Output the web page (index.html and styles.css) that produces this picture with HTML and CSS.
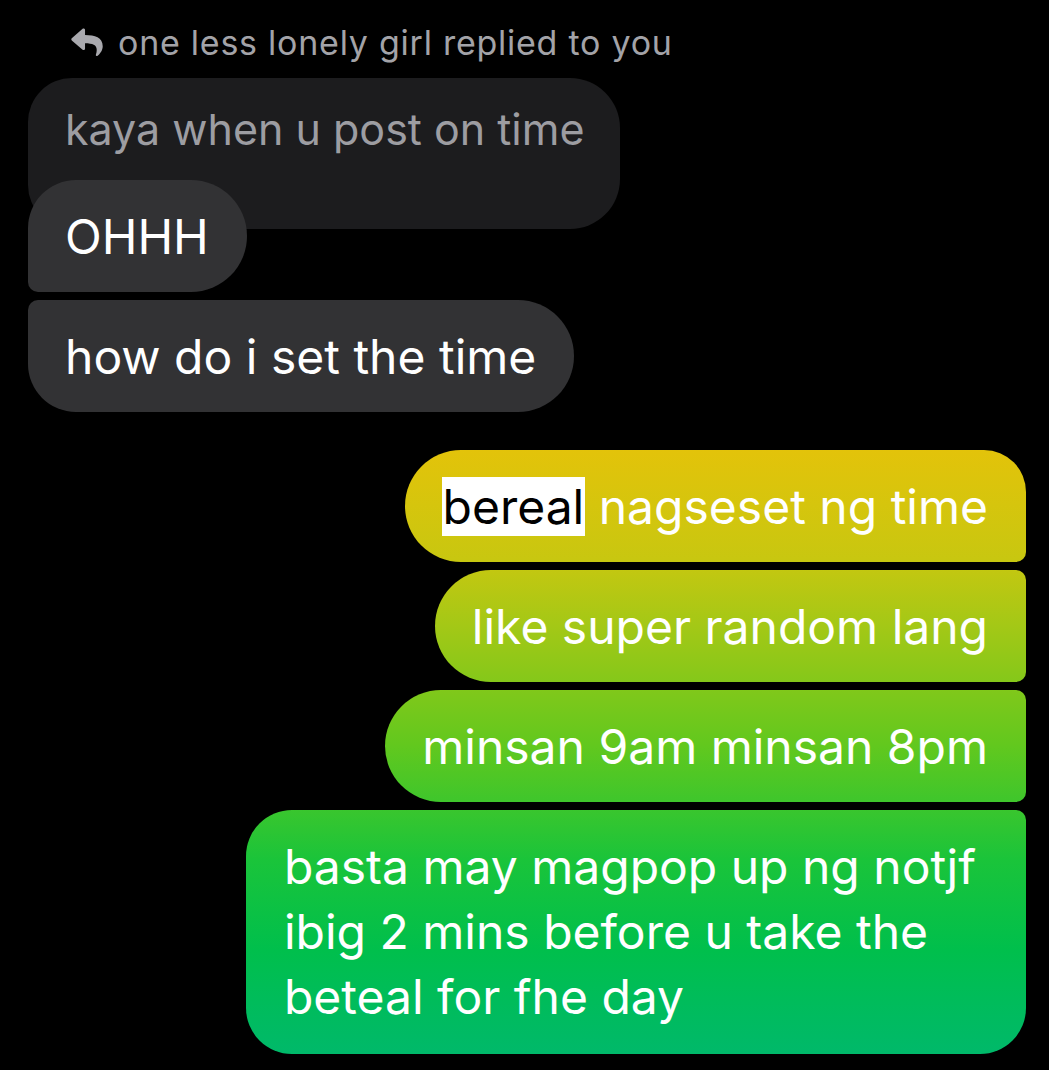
FILE: index.html
```html
<!DOCTYPE html>
<html lang="tl">
<head>
<meta charset="utf-8">
<title>Chat</title>
<link rel="stylesheet" href="styles.css">
</head>
<body>
<div class="chat">
  <div class="reply-note">
    <svg class="reply-icon" viewBox="0 24 512 456" aria-hidden="true"><path d="M8.309 189.836L184.313 37.851C199.719 24.546 224 35.347 224 56.015v80.053c160.629 1.839 288 34.032 288 186.258 0 61.441-39.581 122.309-83.333 154.132-13.653 9.931-33.111-2.533-28.077-18.631 45.344-145.012-21.507-183.51-176.59-185.742V360c0 20.7-24.3 31.453-39.687 18.164l-176.004-152c-11.071-9.562-11.086-26.753 0-36.328z"/></svg>
    <span>one less lonely girl replied to you</span>
  </div>
  <div class="group recv">
    <div class="quote">kaya when u post on time</div>
    <div class="bubble in in-first">OHHH</div>
    <div class="bubble in in-last">how do i set the time</div>
  </div>
  <div class="group sent">
    <div class="bubble out out-first"><span class="hl">bereal</span> nagseset ng time</div>
    <div class="bubble out out-mid">like super random lang</div>
    <div class="bubble out out-mid">minsan 9am minsan 8pm</div>
    <div class="bubble out out-last">basta may magpop up ng notjf<br>ibig 2 mins before u take the<br>beteal for fhe day</div>
  </div>
</div>
</body>
</html>
```
FILE: styles.css
```css
html, body {
  margin: 0;
  padding: 0;
  background: #000;
}
body {
  width: 1049px;
  height: 1070px;
  overflow: hidden;
  font-family: Inter, "Liberation Sans", Arial, sans-serif;
  -webkit-font-smoothing: antialiased;
}
.chat {
  padding: 24px 23px 0 28px;
  display: flex;
  flex-direction: column;
}
.reply-note {
  display: flex;
  align-items: center;
  gap: 14px;
  margin-left: 42px;
  height: 36px;
  color: #a3a3a8;
  font-size: 34px;
  letter-spacing: 0.75px;
  white-space: nowrap;
}
.reply-icon {
  width: 34px;
  height: 28px;
  fill: #a9a9ae;
}
.group {
  display: flex;
  flex-direction: column;
}
.recv {
  align-items: flex-start;
  margin-top: 18px;
}
.sent {
  align-items: flex-end;
  margin-top: 38px;
  gap: 8px;
}
.quote {
  box-sizing: border-box;
  width: 592px;
  height: 151px;
  padding: 20px 38px 0 37px;
  background: #1c1c1e;
  color: #9d9da2;
  font-size: 43px;
  line-height: 63px;
  white-space: nowrap;
  border-radius: 44px 50px 50px 44px;
}
.bubble {
  box-sizing: border-box;
  padding: 25px 38px 24px 37px;
  font-size: 48px;
  line-height: 63px;
  color: #fff;
  white-space: nowrap;
}
.in {
  background: #323234;
}
.in-first {
  margin-top: -49px;
  border-radius: 48px 56px 56px 10px;
}
.in-last {
  margin-top: 8px;
  border-radius: 10px 56px 56px 48px;
}
.out {
  background-image: linear-gradient(180deg,
    #e3c30a 0px, #e3c30a 450px,
    #c8c710 560px,
    #a4c816 625px,
    #62c81e 745px,
    #1ac43a 860px,
    #00bf4c 950px,
    #00b96a 1054px, #00b96a 1070px);
  background-attachment: fixed;
  background-size: 1049px 1070px;
}
.out-first {
  border-radius: 56px 42px 10px 56px;
}
.out-mid {
  border-radius: 56px 10px 10px 56px;
}
.out-last {
  padding: 24px 50px 25px 38px;
  line-height: 65px;
  border-radius: 46px 10px 46px 46px;
}
.hl {
  background: #fff;
  color: #000;
  padding: 0 1px;
}
```
